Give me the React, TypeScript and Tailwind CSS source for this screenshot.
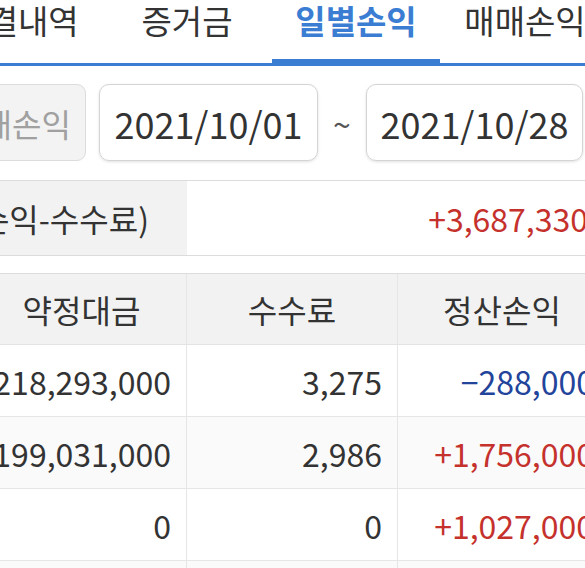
import React from 'react';

const tabs = [
  { label: '체결내역', w: 'w-[168px]', active: false },
  { label: '증거금', w: 'w-[170px]', active: false },
  { label: '일별손익', w: 'w-[168px]', active: true },
  { label: '매매손익', w: 'w-[170px]', active: false },
];

const rows = [
  { amount: '218,293,000', fee: '3,275', pnl: '−288,000', up: false, shade: false },
  { amount: '199,031,000', fee: '2,986', pnl: '+1,756,000', up: true, shade: true },
  { amount: '0', fee: '0', pnl: '+1,027,000', up: true, shade: false },
  { amount: '', fee: '', pnl: '', up: true, shade: true },
];

export default function App() {
  return (
    <div
      className="w-[585px] h-[568px] overflow-hidden bg-white text-[#333]"
      style={{ fontFamily: '"Noto Sans CJK KR", "Noto Sans", sans-serif' }}
    >
      {/* Tabs */}
      <div className="flex -ml-[66px] w-[700px]">
        {tabs.map(t => (
          <div key={t.label} className={`${t.w} h-[66px] flex flex-col justify-between`}>
            <div
              className={`text-center text-[33px] leading-[40px] whitespace-nowrap ${
                t.active ? 'text-[#3b7dd2] font-bold' : 'text-[#333]'
              }`}
            >
              {t.label}
            </div>
            <div className={t.active ? 'h-[7px] bg-[#3b7dd2]' : 'h-[3px] bg-[#3b7dd2]'} />
          </div>
        ))}
      </div>

      {/* Date range */}
      <div className="flex items-center h-[77px] mt-[18px]">
        <div className="-ml-[62px] w-[148px] h-full shrink-0 rounded-[9px] border border-[#dcdcdc] bg-[#f3f3f3] text-[#a0a0a0] text-[32px] flex items-center justify-center whitespace-nowrap">
          매매손익
        </div>
        <div className="ml-[13px] w-[219px] h-full shrink-0 rounded-[10px] border border-[#d4d4d4] shadow-[0_1px_3px_rgba(0,0,0,0.12)] text-[36px] flex items-center justify-center">
          2021/10/01
        </div>
        <div className="w-[48px] shrink-0 text-center text-[32px] leading-none text-[#555]">~</div>
        <div className="w-[217px] h-full shrink-0 rounded-[10px] border border-[#d4d4d4] shadow-[0_1px_3px_rgba(0,0,0,0.12)] text-[36px] flex items-center justify-center">
          2021/10/28
        </div>
      </div>

      {/* Summary */}
      <div className="mt-[19px] w-[606px] h-[76px] flex border-y border-[#dcdcdc]">
        <div className="w-[187px] shrink-0 bg-[#f2f2f2] flex items-center justify-end pr-[38px] text-[32px] whitespace-nowrap">
          총손익(매매손익-수수료)
        </div>
        <div className="flex-1 flex items-center justify-end pr-[18px] text-[32px] text-[#c5312c] whitespace-nowrap">
          +3,687,330
        </div>
      </div>

      {/* Table */}
      <div className="mt-[17px] -ml-[23px] w-[629px] border-t border-[#dcdcdc]">
        <div className="grid grid-cols-[210px_211px_208px] h-[71px] bg-[#f2f2f2] border-b border-[#e3e3e3] text-[32px]">
          <div className="flex items-center justify-center border-r border-[#e6e6e6]">약정대금</div>
          <div className="flex items-center justify-center border-r border-[#e6e6e6]">수수료</div>
          <div className="flex items-center justify-center">정산손익</div>
        </div>
        {rows.map((r, i) => (
          <div
            key={i}
            className={`grid grid-cols-[210px_211px_208px] h-[72px] border-b border-[#e6e6e6] text-[32px] ${
              r.shade ? 'bg-[#fafafa]' : 'bg-white'
            }`}
          >
            <div className="flex items-center justify-end pr-[15px] border-r border-[#e6e6e6] whitespace-nowrap">{r.amount}</div>
            <div className="flex items-center justify-end pr-[15px] border-r border-[#e6e6e6]">{r.fee}</div>
            <div
              className={`flex items-center justify-end pr-[12px] whitespace-nowrap ${
                r.up ? 'text-[#c5312c]' : 'text-[#22449a]'
              }`}
            >
              {r.pnl}
            </div>
          </div>
        ))}
      </div>
    </div>
  );
}
